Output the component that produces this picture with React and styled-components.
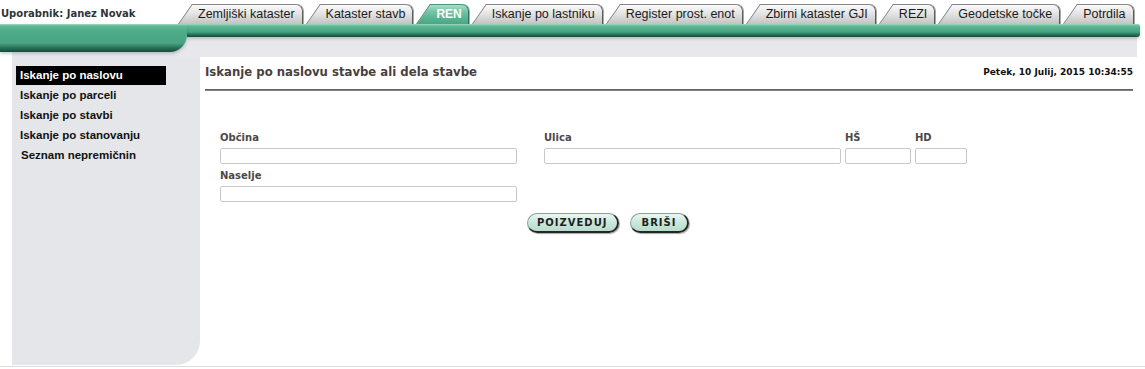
import React from 'react';
import styled, { createGlobalStyle } from 'styled-components';

const GlobalStyle = createGlobalStyle`
  body {
    margin: 0;
    background: #fff;
    font-family: "DejaVu Sans", Verdana, sans-serif;
  }
`;

const Page = styled.div`
  width: 1145px;
  height: 369px;
  overflow: hidden;
`;

const TopRow = styled.div`
  display: flex;
  align-items: flex-end;
  height: 24px;
`;

const UserLabel = styled.div`
  align-self: flex-start;
  flex-shrink: 0;
  width: 178px;
  padding: 8px 0 0 1px;
  box-sizing: border-box;
  font-size: 10px;
  line-height: 12px;
  font-weight: bold;
  color: #2f3438;
`;

const Tabs = styled.div`
  display: flex;
  align-items: flex-end;
  flex-shrink: 0;
`;

const Tab = styled.div`
  position: relative;
  isolation: isolate;
  flex-shrink: 0;
  height: 20px;
  box-sizing: border-box;
  margin-left: ${p => (p.$first ? 14 : 17)}px;
  padding: 0 ${p => (p.$active ? 6 : 7)}px 0 6px;
  border: 1px solid ${p => (p.$active ? '#4b957b' : '#868686')};
  border-left: 0;
  border-bottom: 0;
  border-right-color: ${p => (p.$active ? '#2f6f59' : '#5c5c5c')};
  border-top-right-radius: 7px;
  box-shadow: 1px 0 0 ${p => (p.$active ? '#8cc2ae' : '#a9a9a9')};
  background: ${p =>
    p.$active
      ? 'linear-gradient(#a9ddc9, #74c4a5 35%, #55b18f 75%, #4aa685)'
      : 'linear-gradient(#fafafa, #e4e4e4 45%, #cfcfcf 80%, #c2c2c2)'};
  font-family: "Liberation Sans", Arial, sans-serif;
  font-size: ${p => (p.$active ? 12 : 12.5)}px;
  font-weight: ${p => (p.$active ? 'bold' : 'normal')};
  line-height: 19px;
  color: ${p => (p.$active ? '#fff' : '#1b1b1b')};
  white-space: nowrap;

  &::before {
    content: '';
    position: absolute;
    z-index: -1;
    top: -1px;
    bottom: 0;
    left: -14px;
    width: 24px;
    background: inherit;
    border-top: 1px solid ${p => (p.$active ? '#4b957b' : '#868686')};
    border-left: 1px solid ${p => (p.$active ? '#3e866d' : '#7a7a7a')};
    transform: skewX(-35deg);
    transform-origin: bottom left;
  }
`;

const Top = styled.div`
  display: flex;
  align-items: flex-start;
  width: 1140px;
  height: 33px;
  background: linear-gradient(
    to right,
    transparent 12px,
    #e7e7ec 12px,
    #e7e7ec 1137px,
    transparent 1137px
  );
`;

const Flap = styled.div`
  position: relative;
  z-index: 1;
  width: 187px;
  height: 28px;
  border-bottom-right-radius: 17px;
  background: linear-gradient(
    #a3dbc6 0,
    #5fb995 2px,
    #4fad8b 6px,
    #48a484 19px,
    #2d7a60 23px,
    #174838 28px
  );
  box-shadow: 0 2px 3px rgba(40, 80, 70, 0.25);
`;

const Bar = styled.div`
  flex: 1;
  height: 13px;
  border-radius: 0 2px 3px 0;
  background: linear-gradient(
    #a3dbc6 0,
    #5fb995 2px,
    #4fad8b 5px,
    #48a484 8px,
    #2d7a60 10px,
    #174838 13px
  );
  box-shadow: 0 2px 3px rgba(40, 80, 70, 0.25);
`;

const Body = styled.div`
  display: flex;
  margin-left: 12px;
  width: 1125px;
  height: 308px;
`;

const Sidebar = styled.nav`
  width: 188px;
  padding: 9px 0 0 4px;
  box-sizing: border-box;
  background: #e5e6e9;
  border-bottom-right-radius: 24px;
`;

const MenuItem = styled.div`
  width: 150px;
  height: 19px;
  margin-bottom: 1px;
  padding-left: ${p => (p.$indent ? 5 : 4)}px;
  box-sizing: border-box;
  font-family: "Liberation Sans", Arial, sans-serif;
  font-size: 11.5px;
  font-weight: bold;
  line-height: 19px;
  color: ${p => (p.$active ? '#fff' : '#111')};
  background: ${p => (p.$active ? '#000' : 'transparent')};
`;

const Main = styled.main`
  flex: 1;
  background: #fff;
  padding: 7px 4px 0 5px;
`;

const TitleRow = styled.div`
  display: flex;
  justify-content: space-between;
  align-items: center;
  height: 16px;
`;

const Title = styled.h1`
  margin: 0;
  font-size: 11.7px;
  font-weight: bold;
  color: #4a3f3f;
`;

const DateText = styled.div`
  font-size: 9px;
  font-weight: bold;
  color: #111;
`;

const Rule = styled.div`
  margin-top: 9px;
  height: 2px;
  background: linear-gradient(#5a5a5a, #8a8a8a);
`;

const Form = styled.div`
  margin-top: 41px;
  padding-left: 15px;
  display: flex;
  flex-direction: column;
  gap: 6px;
`;

const Row = styled.div`
  display: flex;
`;

const Field = styled.label`
  display: block;
  width: ${p => p.$w}px;
  margin-left: ${p => p.$ml || 0}px;
`;

const Label = styled.span`
  display: block;
  margin-bottom: 4px;
  font-size: 10px;
  line-height: 12px;
  font-weight: bold;
  color: #4d4747;
`;

const Input = styled.input`
  display: block;
  width: 100%;
  height: 16px;
  margin: 0;
  padding: 0 3px;
  box-sizing: border-box;
  border: 1px solid #c9c9c9;
  border-radius: 2px;
  background: #fff;
  font-size: 10px;
`;

const Buttons = styled.div`
  display: flex;
  gap: 11px;
  margin-top: 11px;
  padding-left: 322px;
`;

const Button = styled.button`
  height: 20px;
  padding: 0 ${p => p.$px}px;
  border: 1px solid #83a397;
  border-right: 2px solid #262626;
  border-bottom: 2px solid #262626;
  border-radius: 10px;
  background: linear-gradient(#edf7f2, #cce8dc 45%, #b7dccc);
  box-shadow: 1px 1px 1px rgba(0, 0, 0, 0.35);
  font-family: "DejaVu Sans", Verdana, sans-serif;
  font-size: 10px;
  font-weight: bold;
  letter-spacing: 1px;
  color: #1e1e1e;
  line-height: 16px;
`;

const BottomLine = styled.div`
  margin-top: 1px;
  height: 1px;
  background: #dcdcdc;
`;

const tabs = [
  'Zemljiški kataster',
  'Kataster stavb',
  'REN',
  'Iskanje po lastniku',
  'Register prost. enot',
  'Zbirni kataster GJI',
  'REZI',
  'Geodetske točke',
  'Potrdila',
];

const menu = [
  'Iskanje po naslovu',
  'Iskanje po parceli',
  'Iskanje po stavbi',
  'Iskanje po stanovanju',
  'Seznam nepremičnin',
];

export default function App() {
  return (
    <Page>
      <GlobalStyle />
      <TopRow>
        <UserLabel>Uporabnik: Janez Novak</UserLabel>
        <Tabs>
          {tabs.map((t, i) => (
            <Tab key={t} $first={i === 0} $active={t === 'REN'}>
              {t}
            </Tab>
          ))}
        </Tabs>
      </TopRow>
      <Top>
        <Flap />
        <Bar />
      </Top>
      <Body>
        <Sidebar>
          {menu.map((m, i) => (
            <MenuItem key={m} $active={i === 0} $indent={i === 4}>
              {m}
            </MenuItem>
          ))}
        </Sidebar>
        <Main>
          <TitleRow>
            <Title>Iskanje po naslovu stavbe ali dela stavbe</Title>
            <DateText>Petek, 10 Julij, 2015 10:34:55</DateText>
          </TitleRow>
          <Rule />
          <Form>
            <Row>
              <Field $w={297}>
                <Label>Občina</Label>
                <Input />
              </Field>
              <Field $w={297} $ml={27}>
                <Label>Ulica</Label>
                <Input />
              </Field>
              <Field $w={66} $ml={4}>
                <Label>HŠ</Label>
                <Input />
              </Field>
              <Field $w={52} $ml={4}>
                <Label>HD</Label>
                <Input />
              </Field>
            </Row>
            <Row>
              <Field $w={297}>
                <Label>Naselje</Label>
                <Input />
              </Field>
            </Row>
          </Form>
          <Buttons>
            <Button $px={9}>POIZVEDUJ</Button>
            <Button $px={11}>BRIŠI</Button>
          </Buttons>
        </Main>
      </Body>
      <BottomLine />
    </Page>
  );
}
